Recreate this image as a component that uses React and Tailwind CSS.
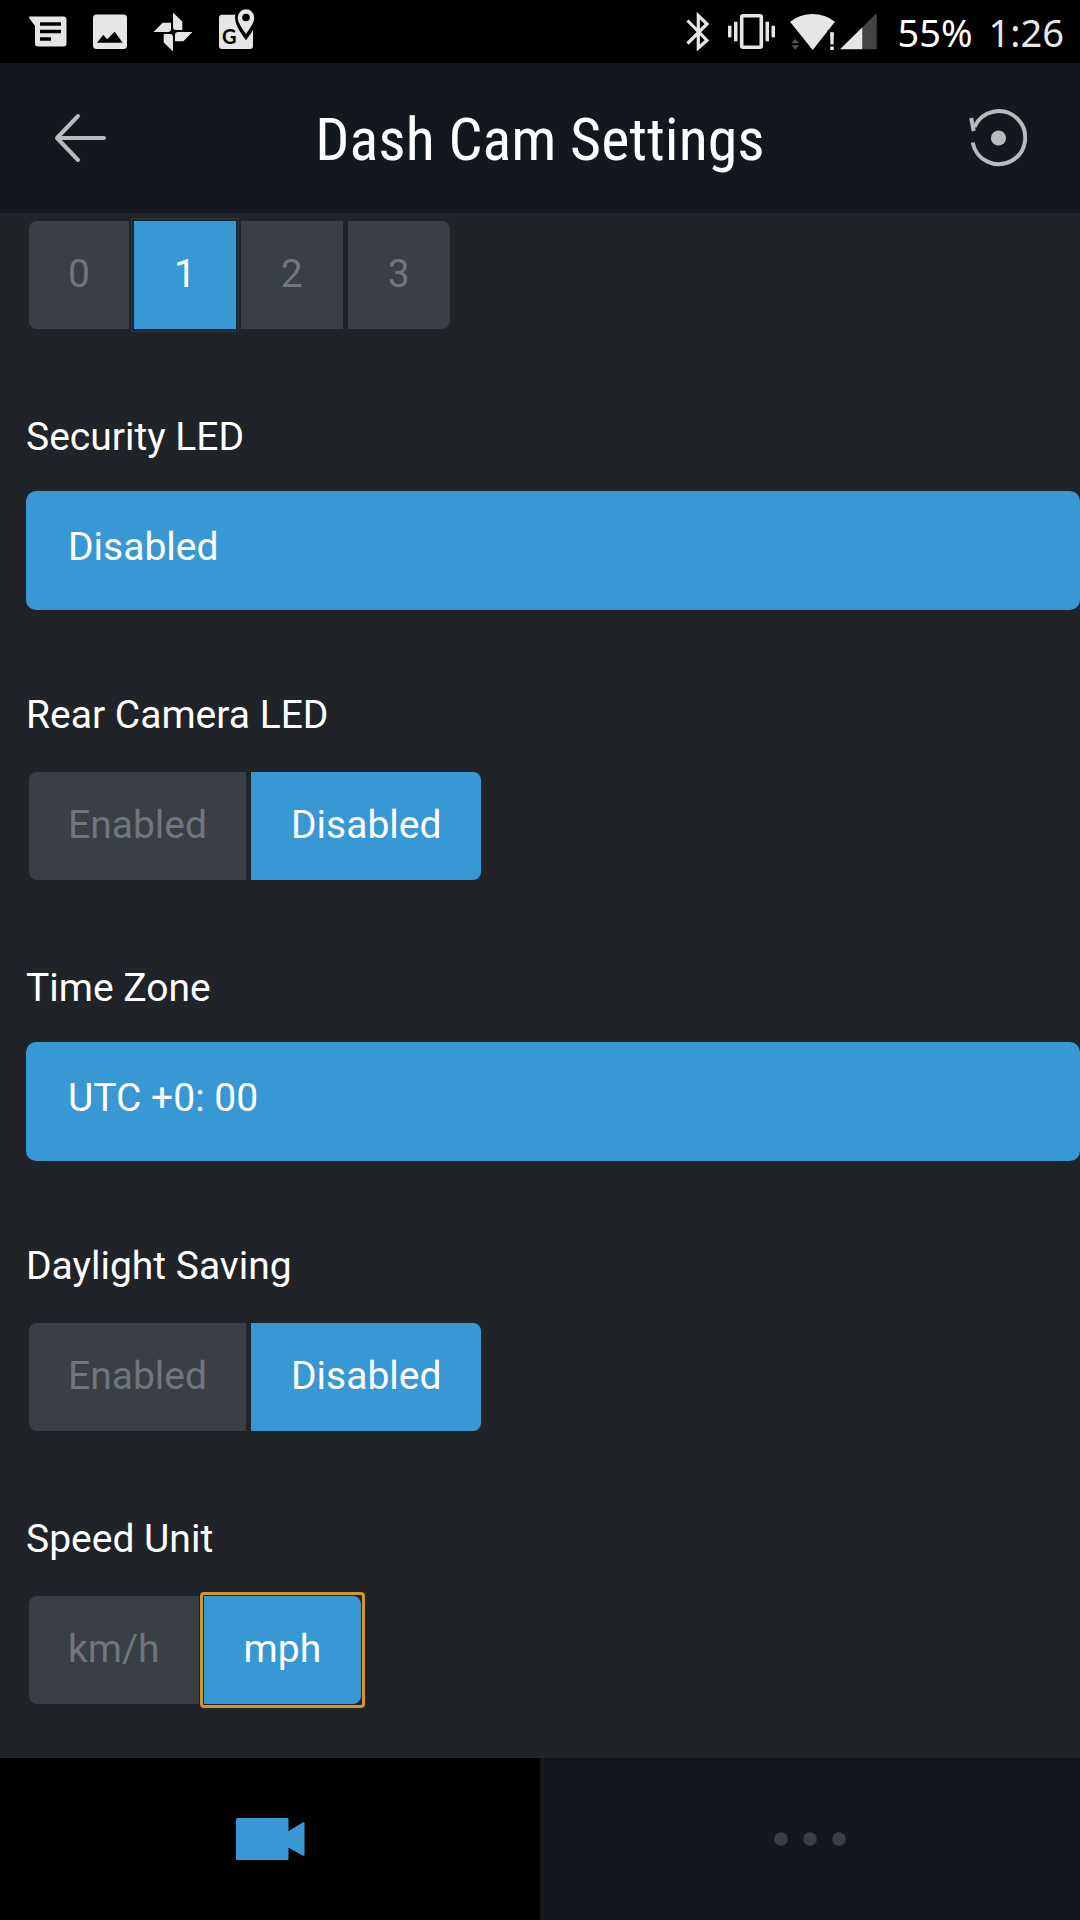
import React, { useState } from 'react';
import clsx from 'clsx';

const MessageIcon = () => (
  <svg width="38" height="42" viewBox="0 0 38 42">
    <path d="M0 7.5H34.5a3 3 0 0 1 3 3V34.5a3 3 0 0 1-3 3H9a3 3 0 0 1-3-3V17L.5 9.5z" fill="#e6e6e6" />
    <path d="M11 15H32M11 22.5H32M11 30H22" stroke="#000" strokeWidth="3.6" />
  </svg>
);

const ImageIcon = () => (
  <svg width="34" height="42" viewBox="0 0 34 42">
    <rect y="5.5" width="34" height="34.5" rx="3.5" fill="#e6e6e6" />
    <path d="M4 33.7L10.3 25.7L14 30.3L21.7 22.7L29.7 33.7z" fill="#000" />
  </svg>
);

const PinwheelIcon = () => (
  <svg width="40" height="42" viewBox="-20 -23 40 42" fill="#e6e6e6">
    <path d="M0 -19.5L9.3 -10.4V-2H3Q0 -2 0 -5z" />
    <path d="M0 -19.5L9.3 -10.4V-2H3Q0 -2 0 -5z" transform="rotate(90)" />
    <path d="M0 -19.5L9.3 -10.4V-2H3Q0 -2 0 -5z" transform="rotate(180)" />
    <path d="M0 -19.5L9.3 -10.4V-2H3Q0 -2 0 -5z" transform="rotate(270)" />
  </svg>
);

const MapsIcon = () => (
  <svg width="36" height="42" viewBox="0 0 36 42">
    <rect y="5.7" width="34" height="34.3" rx="3" fill="#e6e6e6" />
    <path d="M27 27C24 23 18.5 15 18.5 8.5a8.5 8.5 0 0 1 17 0C35.5 15 30 23 27 27z" fill="#000" stroke="#000" strokeWidth="5" />
    <path d="M27 25C23 19 18.7 14 18.7 8.5a8.3 8.3 0 0 1 16.6 0C35.3 14 31 19 27 25z" fill="#e6e6e6" />
    <circle cx="27" cy="8.5" r="3.8" fill="#000" />
    <text x="3" y="35" fontSize="20" fontWeight="700" fill="#000" className="font-['Lato',sans-serif]">G</text>
  </svg>
);

const BluetoothIcon = () => (
  <svg width="24" height="42" viewBox="0 0 24 42" fill="none" stroke="#e6e6e6" strokeWidth="3.2">
    <path d="M1.5 11.5L21 31.3L12.3 39V6.5L21 15L1.5 34.5" />
  </svg>
);

const VibrateIcon = () => (
  <svg width="47" height="42" viewBox="0 0 47 42" fill="#e6e6e6">
    <rect x="13.7" y="6.7" width="19.6" height="31.6" rx="1.5" fill="none" stroke="#e6e6e6" strokeWidth="3.6" />
    <rect y="16.7" width="3.5" height="11.6" />
    <rect x="6" y="12.7" width="3.5" height="19.6" />
    <rect x="37.5" y="12.7" width="3.5" height="19.6" />
    <rect x="43.5" y="16.7" width="3.5" height="11.6" />
  </svg>
);

const WifiIcon = () => (
  <svg width="45" height="42" viewBox="0 0 45 42">
    <path d="M0 12.7A37 37 0 0 1 45 12.7L22.7 41z" fill="#e6e6e6" />
    <path d="M37.5 21H45V42H37.5z" fill="#000" />
    <path d="M40 23.3H44L43.5 35.5H40.5zM40.2 37.5H43.8V41H40.2z" fill="#e6e6e6" />
    <path d="M5.3 30L9.3 34.3H1.3zM1.3 36.3H9.3L5.3 40.7z" fill="#555" />
  </svg>
);

const SignalIcon = () => (
  <svg width="37" height="42" viewBox="0 0 37 42">
    <path d="M22.3 18.2L36.7 4V40.3H22.3z" fill="#444" />
    <path d="M0 40.3L22.3 18.2V40.3z" fill="#e6e6e6" />
  </svg>
);

const BackIcon = () => (
  <svg width="53" height="50" viewBox="0 0 53 50" fill="none" stroke="#b9babc" strokeWidth="4" strokeLinecap="round" strokeLinejoin="round">
    <path d="M25 3L4 25L25 47M4 25H51" />
  </svg>
);

const ResetIcon = () => (
  <svg width="58" height="58" viewBox="0 0 58 58" fill="none" stroke="#b9babc" strokeWidth="4">
    <path d="M3.7 33.5A26.5 26.5 0 1 0 5.5 18" />
    <path d="M2.2 9L4.700 22" />
    <circle cx="29.5" cy="29" r="7.6" fill="#b9babc" stroke="none" />
  </svg>
);

const CameraIcon = () => (
  <svg width="69" height="42" viewBox="0 0 69 42" fill="#3898d4">
    <rect width="52.5" height="42" rx="1.5" />
    <path d="M52 13.5L67 4.3Q68.5 4 68.5 5V37Q68.5 38 67 37.8L52 29.5z" />
  </svg>
);

const DotsIcon = () => (
  <svg width="72" height="14" viewBox="0 0 72 14" fill="#3b3e46">
    <circle cx="7" cy="7" r="6.8" />
    <circle cx="36" cy="7" r="6.8" />
    <circle cx="65" cy="7" r="6.8" />
  </svg>
);

const StatusBar = () => (
  <div className="flex h-[63px] shrink-0 items-center justify-between bg-black pr-[16px] pb-[3px] pl-[29px]">
    <div className="flex items-center gap-[26px]">
      <MessageIcon />
      <ImageIcon />
      <PinwheelIcon />
      <MapsIcon />
    </div>
    <div className="flex items-center text-[38px] leading-[48px] font-['Noto_Sans',sans-serif]">
      <BluetoothIcon />
      <span className="ml-[18px]"><VibrateIcon /></span>
      <span className="ml-[15px]"><WifiIcon /></span>
      <span className="ml-[5px]"><SignalIcon /></span>
      <span className="ml-[21px] pt-[3px] text-white">55%</span>
      <span className="ml-[16px] pt-[3px] text-[#e6e6e6]">1:26</span>
    </div>
  </div>
);

const Segmented = ({ label, labelId, options, initial, focused, glow }) => {
  const [value, setValue] = useState(initial);

  return (
    <div
      role="group"
      aria-label={label}
      aria-labelledby={labelId}
      className="flex gap-[5px] p-[3px]"
    >
      {options.map((option) => {
        const active = option === value;
        return (
          <button
            key={option}
            type="button"
            aria-pressed={active}
            onClick={() => setValue(option)}
            className={clsx(
              'px-[40px] pt-[29px] pb-[31px] first:rounded-l-lg first:px-[39px] last:rounded-r-lg',
              active ? 'bg-[#3898d4] text-white' : 'bg-[#3a3e45] text-[#72767c]',
              active && glow && 'shadow-[0_0_0_2px_#172834,0_0_0_3px_#293a44]',
              focused === option && 'relative before:absolute before:-inset-[4px] before:rounded-[4px] before:border-[3px] before:border-[#cf982f]'
            )}
          >
            {option}
          </button>
        );
      })}
    </div>
  );
};

const Setting = ({ id, title, children }) => (
  <section className="flex flex-col items-start gap-[30px]">
    <h2 id={id}>{title}</h2>
    {children}
  </section>
);

const SelectSetting = ({ id, title, options }) => (
  <section className="flex flex-col items-start gap-[30px]">
    <label htmlFor={id}>{title}</label>
    <select
      id={id}
      className="w-full appearance-none rounded-[10px] bg-[#3898d4] pt-[32px] pr-10 pb-[39px] pl-[42px] text-white outline-none"
    >
      {options.map((option) => (
        <option key={option}>{option}</option>
      ))}
    </select>
  </section>
);

const App = () => {
  const [tab, setTab] = useState('camera');

  return (
    <div className="flex min-h-screen flex-col bg-[#202328] text-white font-['Roboto',sans-serif]">
      <StatusBar />

      {/* Header */}
      <header className="flex h-[150px] shrink-0 items-center justify-between bg-[#13171e] px-[53px]">
        <button type="button" aria-label="Back" className="flex w-[58px]">
          <BackIcon />
        </button>
        <h1 className="pt-[3px] text-[60px] leading-[72px] font-['Roboto_Condensed','Roboto',sans-serif]">
          Dash Cam Settings
        </h1>
        <button type="button" aria-label="Reset settings">
          <ResetIcon />
        </button>
      </header>

      {/* Settings */}
      <main className="flex flex-1 flex-col gap-[81px] pt-[5px] pb-[51px] pl-[26px] text-[39px] leading-[48px]">
        <Segmented label="Sensitivity" options={['0', '1', '2', '3']} initial="1" glow />
        <SelectSetting id="security-led" title="Security LED" options={['Disabled']} />
        <Setting id="rear-led" title="Rear Camera LED">
          <Segmented labelId="rear-led" options={['Enabled', 'Disabled']} initial="Disabled" />
        </Setting>
        <SelectSetting id="time-zone" title="Time Zone" options={['UTC +0: 00']} />
        <Setting id="daylight" title="Daylight Saving">
          <Segmented labelId="daylight" options={['Enabled', 'Disabled']} initial="Disabled" />
        </Setting>
        <Setting id="speed-unit" title="Speed Unit">
          <Segmented labelId="speed-unit" options={['km/h', 'mph']} initial="mph" focused="mph" />
        </Setting>
      </main>

      {/* Bottom tabs */}
      <nav className="grid h-[162px] shrink-0 grid-cols-2">
        <button
          type="button"
          aria-label="Camera"
          onClick={() => setTab('camera')}
          className={clsx('flex items-center justify-center', tab === 'camera' ? 'bg-black' : 'bg-[#13171e]')}
        >
          <CameraIcon />
        </button>
        <button
          type="button"
          aria-label="More"
          onClick={() => setTab('more')}
          className={clsx('flex items-center justify-center', tab === 'more' ? 'bg-black' : 'bg-[#13171e]')}
        >
          <DotsIcon />
        </button>
      </nav>
    </div>
  );
};

export default App;
